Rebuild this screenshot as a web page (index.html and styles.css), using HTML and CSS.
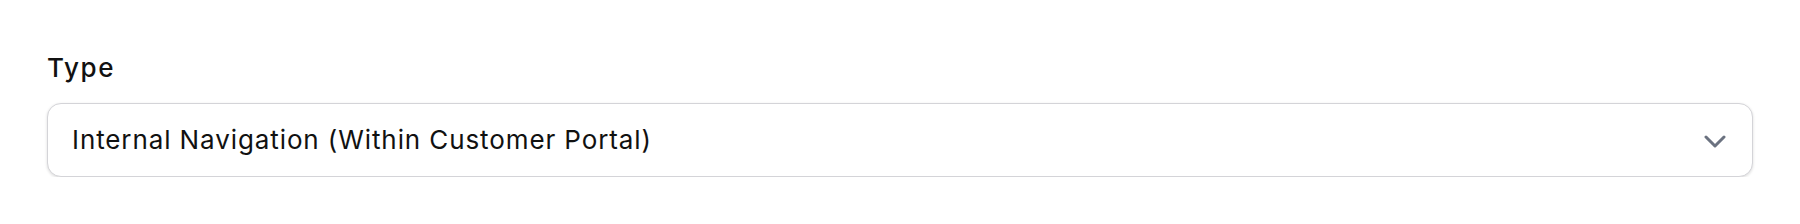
FILE: index.html
```html
<!DOCTYPE html>
<html lang="en">
<head>
<meta charset="utf-8">
<title>Type select</title>
<link rel="stylesheet" href="styles.css">
</head>
<body>
<div class="field">
  <label class="label" for="type">Type</label>
  <div class="select" id="type">
    <span class="value">Internal Navigation (Within Customer Portal)</span>
    <svg class="chevron" width="22" height="13" viewBox="0 0 22 13" aria-hidden="true">
      <polyline points="2,2 11,11 20,2" fill="none" stroke="#6b7280" stroke-width="3" stroke-linecap="round" stroke-linejoin="round"/>
    </svg>
  </div>
</div>
</body>
</html>
```
FILE: styles.css
```css
html, body {
  margin: 0;
  padding: 0;
  background: #ffffff;
}
body {
  font-family: "Inter", "Noto Sans", sans-serif;
  color: #111111;
}
.field {
  display: flex;
  flex-direction: column;
  padding: 52px 47px 0 47px;
}
.label {
  font-size: 26px;
  line-height: 32px;
  font-weight: 500;
  letter-spacing: 1.6px;
  color: #111111;
  margin-bottom: 19px;
}
.select {
  display: flex;
  align-items: center;
  justify-content: space-between;
  height: 72px;
  border: 1px solid #d4d4d8;
  border-radius: 14px;
  background: #ffffff;
  box-shadow: 0 1px 3px rgba(0, 0, 0, 0.14);
  padding: 0 26px 0 24px;
}
.value {
  font-size: 26px;
  line-height: 32px;
  font-weight: 400;
  letter-spacing: 0.9px;
  color: #111111;
}
.chevron {
  display: block;
  margin-top: 2px;
}
```
